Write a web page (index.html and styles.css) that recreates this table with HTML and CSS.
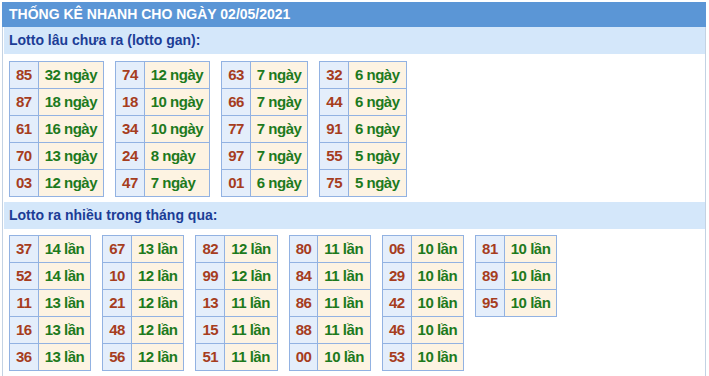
FILE: index.html
```html
<!DOCTYPE html>
<html lang="vi">
<head>
<meta charset="utf-8">
<title>Thống kê nhanh</title>
<link rel="stylesheet" href="styles.css">
</head>
<body>
<div class="box">
  <div class="title">THỐNG KÊ NHANH CHO NGÀY 02/05/2021</div>
  <div class="body">
    <div class="sub">Lotto lâu chưa ra (lotto gan):</div>
    <div class="tables">
      <table class="t"><tr><td class="n">85</td><td class="v">32 ngày</td></tr><tr><td class="n">87</td><td class="v">18 ngày</td></tr><tr><td class="n">61</td><td class="v">16 ngày</td></tr><tr><td class="n">70</td><td class="v">13 ngày</td></tr><tr><td class="n">03</td><td class="v">12 ngày</td></tr></table>
      <table class="t"><tr><td class="n">74</td><td class="v">12 ngày</td></tr><tr><td class="n">18</td><td class="v">10 ngày</td></tr><tr><td class="n">34</td><td class="v">10 ngày</td></tr><tr><td class="n">24</td><td class="v">8 ngày</td></tr><tr><td class="n">47</td><td class="v">7 ngày</td></tr></table>
      <table class="t"><tr><td class="n">63</td><td class="v">7 ngày</td></tr><tr><td class="n">66</td><td class="v">7 ngày</td></tr><tr><td class="n">77</td><td class="v">7 ngày</td></tr><tr><td class="n">97</td><td class="v">7 ngày</td></tr><tr><td class="n">01</td><td class="v">6 ngày</td></tr></table>
      <table class="t"><tr><td class="n">32</td><td class="v">6 ngày</td></tr><tr><td class="n">44</td><td class="v">6 ngày</td></tr><tr><td class="n">91</td><td class="v">6 ngày</td></tr><tr><td class="n">55</td><td class="v">5 ngày</td></tr><tr><td class="n">75</td><td class="v">5 ngày</td></tr></table>
    </div>
    <div class="sub">Lotto ra nhiều trong tháng qua:</div>
    <div class="tables second">
      <table class="t"><tr><td class="n">37</td><td class="v">14 lần</td></tr><tr><td class="n">52</td><td class="v">14 lần</td></tr><tr><td class="n">11</td><td class="v">13 lần</td></tr><tr><td class="n">16</td><td class="v">13 lần</td></tr><tr><td class="n">36</td><td class="v">13 lần</td></tr></table>
      <table class="t"><tr><td class="n">67</td><td class="v">13 lần</td></tr><tr><td class="n">10</td><td class="v">12 lần</td></tr><tr><td class="n">21</td><td class="v">12 lần</td></tr><tr><td class="n">48</td><td class="v">12 lần</td></tr><tr><td class="n">56</td><td class="v">12 lần</td></tr></table>
      <table class="t"><tr><td class="n">82</td><td class="v">12 lần</td></tr><tr><td class="n">99</td><td class="v">12 lần</td></tr><tr><td class="n">13</td><td class="v">11 lần</td></tr><tr><td class="n">15</td><td class="v">11 lần</td></tr><tr><td class="n">51</td><td class="v">11 lần</td></tr></table>
      <table class="t"><tr><td class="n">80</td><td class="v">11 lần</td></tr><tr><td class="n">84</td><td class="v">11 lần</td></tr><tr><td class="n">86</td><td class="v">11 lần</td></tr><tr><td class="n">88</td><td class="v">11 lần</td></tr><tr><td class="n">00</td><td class="v">10 lần</td></tr></table>
      <table class="t"><tr><td class="n">06</td><td class="v">10 lần</td></tr><tr><td class="n">29</td><td class="v">10 lần</td></tr><tr><td class="n">42</td><td class="v">10 lần</td></tr><tr><td class="n">46</td><td class="v">10 lần</td></tr><tr><td class="n">53</td><td class="v">10 lần</td></tr></table>
      <table class="t"><tr><td class="n">81</td><td class="v">10 lần</td></tr><tr><td class="n">89</td><td class="v">10 lần</td></tr><tr><td class="n">95</td><td class="v">10 lần</td></tr></table>
    </div>
  </div>
</div>
</body>
</html>
```
FILE: styles.css
```css
html, body {
  margin: 0;
  padding: 0;
  background: #ffffff;
}
body {
  font-family: "Liberation Sans", Arial, sans-serif;
  font-size: 14px;
  font-weight: bold;
}
.box {
  width: 704px;
  margin: 2px 0 0 2px;
}
.title {
  height: 25px;
  line-height: 25px;
  padding-left: 7px;
  background: #5b96d6;
  color: #ffffff;
}
.body {
  border-left: 1px solid #c3d2e3;
  border-right: 1px solid #c3d2e3;
  padding: 0 0 0 1px;
}
.sub {
  height: 27px;
  line-height: 27px;
  padding-left: 5px;
  background: #d4e7fa;
  color: #1c3d96;
}
.tables {
  display: flex;
  align-items: flex-start;
  gap: 11px;
  padding: 7px 0 5px 5px;
}
.tables.second {
  padding-top: 6px;
}
.t {
  border-collapse: collapse;
}
.t td {
  border: 1px solid #92b2e2;
  height: 26px;
  padding: 0 6px;
  line-height: 26px;
  font-size: 15px;
  letter-spacing: -0.5px;
  white-space: nowrap;
}
.t td.n {
  background: #e4eefb;
  color: #a63d1e;
  text-align: center;
}
.t td.v {
  background: #fdf3e2;
  color: #1d7a1d;
}
```
